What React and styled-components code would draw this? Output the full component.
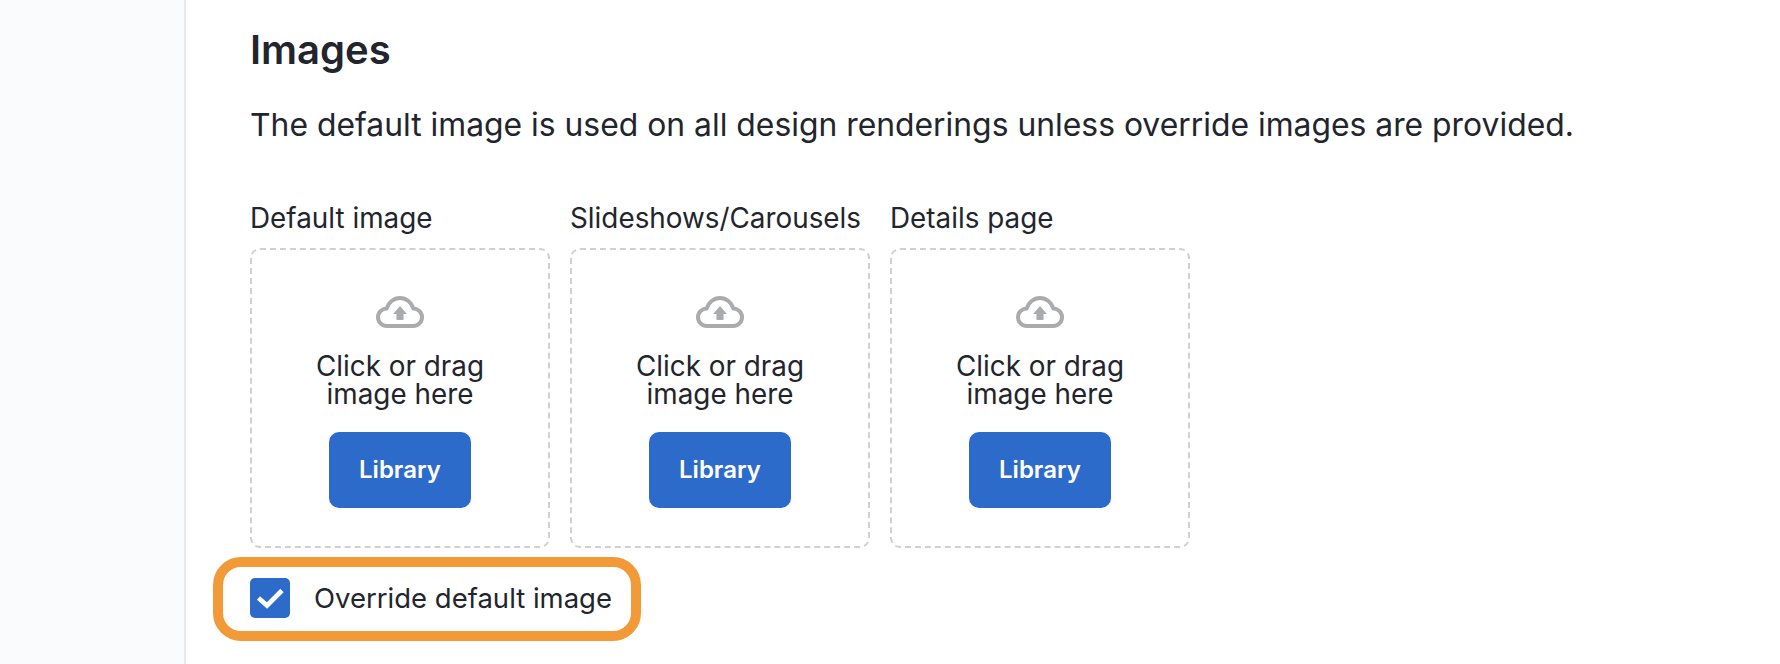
import React from "react";
import styled, { createGlobalStyle } from "styled-components";

const Global = createGlobalStyle`
  html, body { margin: 0; padding: 0; background: #fff; }
  body { font-family: Inter, "Liberation Sans", sans-serif; color: #22252d; }
  * { box-sizing: border-box; }
`;

const Page = styled.div`
  display: flex;
  width: 1780px;
  height: 664px;
  overflow: hidden;
  background: #fff;
`;

const Sidebar = styled.aside`
  flex: 0 0 186px;
  background: #fafbfd;
  border-right: 2px solid #e8e9ec;
`;

const Main = styled.main`
  flex: 1;
  padding: 26px 0 0 64px;
`;

const Title = styled.h2`
  margin: 0;
  font-size: 40px;
  line-height: 48px;
  font-weight: 600;
`;

const Description = styled.p`
  margin: 31px 0 0;
  font-size: 31.85px;
  line-height: 40px;
  font-weight: 400;
  white-space: nowrap;
`;

const Uploads = styled.div`
  display: flex;
  gap: 20px;
  margin-top: 55px;
`;

const Field = styled.div`
  display: flex;
  flex-direction: column;
  width: 300px;
`;

const FieldLabel = styled.label`
  font-size: 27.85px;
  line-height: 36px;
  margin-bottom: 12px;
  white-space: nowrap;
`;

const DropZone = styled.div`
  width: 300px;
  height: 300px;
  border: 2px dashed #d0d0d2;
  border-radius: 10px;
  display: flex;
  flex-direction: column;
  align-items: center;
  padding-top: 46px;
`;

const CloudIcon = styled.svg`
  width: 48px;
  height: 32px;
  display: block;
`;

const DropText = styled.div`
  margin-top: 24px;
  font-size: 27.85px;
  line-height: 28px;
  text-align: center;
`;

const LibraryButton = styled.button`
  margin-top: 24px;
  width: 142px;
  height: 76px;
  padding: 0 0 2px;
  border: 0;
  border-radius: 10px;
  background: #2d6bcb;
  color: #fff;
  font-family: inherit;
  font-size: 24px;
  font-weight: 600;
`;

const Highlight = styled.div`
  display: inline-flex;
  align-items: center;
  gap: 24px;
  margin: 9px 0 0 -37px;
  height: 84px;
  padding: 0 19px 2px 27px;
  border: 10px solid #f29a38;
  border-radius: 28px;
`;

const Checkbox = styled.span`
  flex: none;
  width: 40px;
  height: 40px;
  border-radius: 5px;
  background: #2d6bcb;
  display: flex;
`;

const CheckLabel = styled.span`
  font-size: 27.5px;
  line-height: 36px;
  white-space: nowrap;
`;

const Cloud = () => (
  <CloudIcon viewBox="0 0 48 32" aria-hidden="true">
    <path
      d="M11 30C5.8 30 2 26 2 21.2C2 16.4 5.8 12.8 10.5 12.6C12.4 6.4 17.8 2 24 2C30.2 2 35.6 6.4 37.5 12.6C42.2 12.8 46 16.4 46 21.2C46 26 42.2 30 37 30Z"
      fill="none"
      stroke="#aaabaf"
      strokeWidth="4"
      strokeLinejoin="round"
    />
    <path d="M24 10L31 18H27.5V24H20.5V18H17Z" fill="#aaabaf" />
  </CloudIcon>
);

const fields = ["Default image", "Slideshows/Carousels", "Details page"];

export default function App() {
  return (
    <Page>
      <Global />
      <Sidebar />
      <Main>
        <Title>Images</Title>
        <Description>
          The default image is used on all design renderings unless override images are provided.
        </Description>
        <Uploads>
          {fields.map((name) => (
            <Field key={name}>
              <FieldLabel>{name}</FieldLabel>
              <DropZone>
                <Cloud />
                <DropText>
                  Click or drag
                  <br />
                  image here
                </DropText>
                <LibraryButton>Library</LibraryButton>
              </DropZone>
            </Field>
          ))}
        </Uploads>
        <Highlight>
          <Checkbox>
            <svg width="40" height="40" viewBox="0 0 40 40" aria-hidden="true">
              <path d="M8.5 20L17 27.5L32 12.5" fill="none" stroke="#fff" strokeWidth="4.6" />
            </svg>
          </Checkbox>
          <CheckLabel>Override default image</CheckLabel>
        </Highlight>
      </Main>
    </Page>
  );
}
